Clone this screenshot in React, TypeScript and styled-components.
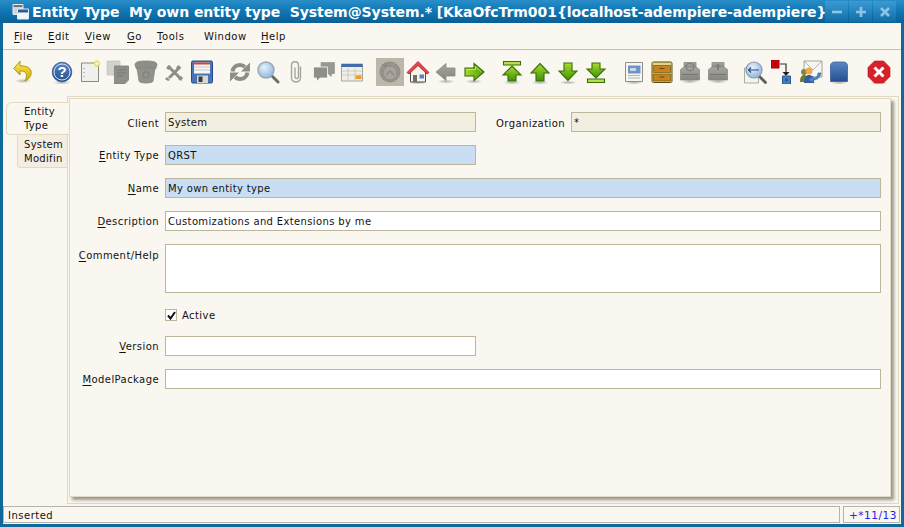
import React from 'react';
import styled, { createGlobalStyle } from 'styled-components';

const GlobalStyle = createGlobalStyle`
  html, body {
    margin: 0;
    padding: 0;
    height: 527px;
    overflow: hidden;
    background: #0f6a9c;
  }
  * { box-sizing: border-box; }
`;

const uiFont = `"DejaVu Sans", "Liberation Sans", sans-serif`;

const Frame = styled.div`
  width: 904px;
  height: 527px;
  display: flex;
  flex-direction: column;
  background: #0f6a9c;
  font-family: ${uiFont};
  font-size: 10px;
  color: #111;
`;

const TitleBar = styled.div`
  height: 23px;
  flex: none;
  display: flex;
  align-items: center;
  padding-left: 12px;
  background: linear-gradient(#2a8ec8 0%, #0f78b6 45%, #0a5f96 100%);
`;

const TitleIcon = styled.svg`
  flex: none;
  width: 17px;
  height: 17px;
`;

const TitleText = styled.div`
  flex: none;
  width: 790px;
  margin-left: 3px;
  white-space: pre;
  color: #fff;
  font-weight: bold;
  font-size: 14px;
  letter-spacing: -0.07px;
`;

const WinButtons = styled.div`
  flex: none;
  display: flex;
  height: 21px;
  margin-left: auto;
  margin-right: 8px;
  gap: 1px;
`;

const WinButton = styled.div`
  width: 23px;
  display: flex;
  align-items: center;
  justify-content: center;
  background: linear-gradient(#3a9ad2, #0f6ea8);
`;

const Client = styled.div`
  flex: 1;
  min-height: 0;
  margin: 0 3px 3px;
  display: flex;
  flex-direction: column;
  background: #faf7f0;
`;

const MenuBar = styled.div`
  height: 27px;
  flex: none;
  display: flex;
  align-items: center;
  padding: 1px 0 0 11px;
  border-bottom: 1px solid #c6bfa9;
`;

const MenuItem = styled.div<{ $w: number }>`
  width: ${(p) => p.$w}px;
  letter-spacing: 0.55px;
  u { text-underline-offset: 2px; }
`;

const Toolbar = styled.div`
  height: 46px;
  flex: none;
  display: flex;
  padding: 8px 0 0 6px;
  gap: 10px;
`;

const ToolGroup = styled.div<{ $gapLeft?: number }>`
  display: flex;
  margin-left: ${(p) => p.$gapLeft ?? 0}px;
`;

const ToolButton = styled.div<{ $active?: boolean }>`
  width: 28px;
  height: 28px;
  display: flex;
  align-items: center;
  justify-content: center;
  background: ${(p) => (p.$active ? '#bcb7a8' : 'transparent')};
`;

const Body = styled.div`
  flex: 1;
  min-height: 0;
  display: flex;
  padding-right: 2px;
`;

const TabColumn = styled.div`
  width: 64px;
  flex: none;
  padding: 6px 0 0 3px;
  display: flex;
  flex-direction: column;
`;

const Tab = styled.div<{ $selected?: boolean }>`
  position: relative;
  z-index: 1;
  white-space: pre;
  overflow: hidden;
  line-height: 14px;
  letter-spacing: 0.3px;
  height: 33px;
  margin-left: ${(p) => (p.$selected ? 0 : 11)}px;
  margin-right: ${(p) => (p.$selected ? -2 : -1)}px;
  padding: ${(p) => (p.$selected ? 2 : 3)}px 0 0 ${(p) => (p.$selected ? 17 : 6)}px;
  background: ${(p) => (p.$selected ? '#faf7f0' : '#f3eee1')};
  border: 1px solid #e2d9c2;
  border-right: ${(p) => (p.$selected ? 'none' : '1px solid #e2d9c2')};
  border-top: ${(p) => (p.$selected ? '1px solid #e2d9c2' : 'none')};
  border-radius: ${(p) => (p.$selected ? '6px 0 0 4px' : '0 0 0 4px')};
`;

const TabFrame = styled.div`
  flex: 1;
  min-width: 0;
  display: flex;
  padding: 1px 7px 6px 1px;
  border: 1px solid #e2d9c2;
`;

const Panel = styled.div`
  flex: 1;
  border: 1px solid #e2d9c2;
  box-shadow: 3px 3px 3px rgba(90, 85, 70, 0.6);
  background: #faf7f0;
  padding: 13px 0 0;
`;

const Form = styled.div`
  display: grid;
  grid-template-columns: 89px 311px 83px 310px;
  column-gap: 6px;
  row-gap: 13px;
  align-items: center;
`;

const Label = styled.div<{ $top?: boolean; $nudge?: number }>`
  text-align: right;
  white-space: nowrap;
  letter-spacing: 0.42px;
  align-self: ${(p) => (p.$top ? 'start' : 'center')};
  padding-top: ${(p) => p.$nudge ?? 0}px;
  u { text-underline-offset: 2px; }
`;

const Field = styled.div<{ $kind?: 'readonly' | 'mandatory'; $span?: boolean; $tall?: boolean }>`
  height: ${(p) => (p.$tall ? 49 : 20)}px;
  grid-column: ${(p) => (p.$span ? 'span 3' : 'auto')};
  padding: 3px 0 0 2px;
  line-height: 14px;
  letter-spacing: 0.36px;
  white-space: pre;
  border: 1px solid #bdb59c;
  background: ${(p) =>
    p.$kind === 'readonly' ? '#f1efe0' : p.$kind === 'mandatory' ? '#c9def2' : '#ffffff'};
`;

const CheckRow = styled.div`
  grid-column: 2 / span 3;
  display: flex;
  align-items: center;
  height: 17px;
  padding-top: 1px;
  letter-spacing: 0.42px;
`;

const CheckBox = styled.div`
  width: 12px;
  height: 12px;
  margin-right: 5px;
  border: 1px solid #bdb59c;
  background: #fff;
  display: flex;
  align-items: center;
  justify-content: center;
`;

const StatusBar = styled.div`
  height: 17px;
  flex: none;
  margin: 2px 1px 1px 0;
  display: flex;
  gap: 3px;
`;

const StatusCell = styled.div<{ $count?: boolean }>`
  flex: ${(p) => (p.$count ? '0 0 57px' : '1')};
  border: 1px solid #b5b3aa;
  line-height: 17px;
  padding-left: ${(p) => (p.$count ? 5 : 4)}px;
  letter-spacing: 0.5px;
  white-space: nowrap;
  font-size: ${(p) => (p.$count ? 10.5 : 10)}px;
  color: ${(p) => (p.$count ? '#2020f0' : '#111')};
`;

const Defs = styled.svg`
  display: block;
  width: 0;
  height: 0;
`;

const GradientDefs = () => (
  <Defs aria-hidden="true">
    <defs>
      <linearGradient id="gGreen" x1="0" y1="0" x2="0" y2="1">
        <stop offset="0" stopColor="#a8dc2c" />
        <stop offset="1" stopColor="#3f8f08" />
      </linearGradient>
      <linearGradient id="gGreenR" x1="0" y1="0" x2="1" y2="0">
        <stop offset="0" stopColor="#a8dc2c" />
        <stop offset="1" stopColor="#4f9c0c" />
      </linearGradient>
      <linearGradient id="gYellow" x1="0" y1="0" x2="0" y2="1">
        <stop offset="0" stopColor="#fbe85a" />
        <stop offset="1" stopColor="#d2a900" />
      </linearGradient>
      <linearGradient id="gGrey" x1="0" y1="0" x2="0" y2="1">
        <stop offset="0" stopColor="#a6a6a2" />
        <stop offset="1" stopColor="#85857f" />
      </linearGradient>
      <linearGradient id="gBlue" x1="0" y1="0" x2="0" y2="1">
        <stop offset="0" stopColor="#5c86c4" />
        <stop offset="1" stopColor="#23508f" />
      </linearGradient>
      <radialGradient id="gLens" cx="0.4" cy="0.35" r="0.7">
        <stop offset="0" stopColor="#e6f1fb" />
        <stop offset="1" stopColor="#8db4de" />
      </radialGradient>
      <radialGradient id="gShadow">
        <stop offset="0" stopColor="#000" stopOpacity="0.28" />
        <stop offset="1" stopColor="#000" stopOpacity="0" />
      </radialGradient>
    </defs>
  </Defs>
);

const Shadow = ({ y = 22, rx = 9 }: { y?: number; rx?: number }) => (
  <ellipse cx="12" cy={y} rx={rx} ry="2.2" fill="url(#gShadow)" />
);

const grey = { fill: 'url(#gGrey)', stroke: '#8a8a85', strokeWidth: 0.8 };
const green = { fill: 'url(#gGreen)', stroke: '#356f06', strokeWidth: 1.1, strokeLinejoin: 'miter' as const };

const PrinterShape = () => (
  <>
    <path d="M6 2.500h12v7H6z" {...grey} />
    <path d="M2.500 9.500 6 7h12l3.500 2.500V20h-19z" {...grey} />
    <path d="M4 14.500h16" stroke="#77776f" strokeWidth="1" />
    <Shadow y={21.500} />
  </>
);

const icons: Record<string, React.ReactNode> = {
  undo: (
    <>
      <Shadow y={21} rx={8} />
      <path
        d="M9 1.200 2.800 8.500 9 15v-4c4 0 6.600 1 6.400 4.600 0 2-.6 3.800-1.600 5.400 4-1.400 6.400-4.800 6.400-8.400C20.200 7.600 15 5.800 9 5.800z"
        fill="url(#gYellow)"
        stroke="#a98c07"
        strokeWidth="0.9"
      />
    </>
  ),
  help: (
    <>
      <Shadow y={22.500} />
      <circle cx="12" cy="12" r="9.800" fill="url(#gBlue)" stroke="#2b5594" strokeWidth="0.8" />
      <circle cx="12" cy="12" r="8" fill="none" stroke="#d4e0f0" strokeWidth="1" />
      <text x="12" y="17" textAnchor="middle" fontFamily="Liberation Sans" fontWeight="bold" fontSize="15" fill="#fff">?</text>
    </>
  ),
  newDoc: (
    <>
      <path d="M3.500 3h17v18.500h-17z" fill="#f0f0ec" stroke="#8a8a84" strokeWidth="1" />
      <path d="M6 8v1M6 12v1M6 16v1" stroke="#8a8a84" />
      <circle cx="19" cy="3.500" r="2.600" fill="#fbf6a0" stroke="#e6cf52" strokeWidth="1" />
    </>
  ),
  copy: (
    <>
      <path d="M1 1h13v14H1z" fill="#d2d2cd" stroke="#c4c4bf" strokeWidth="0.8" />
      <path d="M8.500 6h14v14l-4 4h-10z" fill="#8f8f8a" stroke="#7f7f7a" strokeWidth="0.8" />
      <path d="M11 10h9M11 13h9M11 16h6" stroke="#7a7a75" />
    </>
  ),
  trash: (
    <>
      <path d="M1 5C1 2 4 1 12 1s11 1 11 4l-1.500 4h-19z" fill="#8e8e89" stroke="#84847f" strokeWidth="0.8" />
      <path d="M3 8h18l-2 13c-.2 1-2 2-7 2s-6.800-1-7-2z" fill="#92928d" stroke="#84847f" strokeWidth="0.8" />
      <circle cx="12" cy="15" r="3.200" fill="none" stroke="#7f7f7a" strokeWidth="1" />
    </>
  ),
  cut: (
    <>
      <path d="M6 6 18 18M18 7 7 18" stroke="#8e8e88" strokeWidth="3" />
      <path d="M4 8 7 5 9 7 6.500 10zM16 5l3 2-2 3-3-2zM5 17l3 3-2 1-3-2zM16 19l3-3 2 2-2 3z" fill="#8e8e88" />
    </>
  ),
  save: (
    <>
      <path d="M1.500 2.500C1.500 1.500 2 1 3 1h18c1 0 1.500.5 1.500 1.500v19c0 1-.5 1.500-1.500 1.500H3c-1 0-1.500-.5-1.500-1.500z" fill="#4a74b4" stroke="#1f4a8c" strokeWidth="1" />
      <path d="M4 2.500h16v11H4z" fill="#f6f6f6" />
      <path d="M4 2.500h16v2H4z" fill="#d9412f" />
      <path d="M4 7h16M4 10h16" stroke="#c4c8d4" />
      <path d="M7 15.500h11V23H7z" fill="#d8d8d4" />
      <path d="M8.500 16.500h4V22h-4z" fill="#3c3c3c" />
    </>
  ),
  refresh: (
    <>
      <path d="M4.500 11.500C5 7 8.500 5 12 5c2 0 3.500.6 5 2" fill="none" stroke="#8e8e89" strokeWidth="4" />
      <path d="M22 2.500v9h-9z" fill="#8e8e89" />
      <path d="M19.500 12.500C19 17 15.500 19 12 19c-2 0-3.500-.6-5-2" fill="none" stroke="#8e8e89" strokeWidth="4" />
      <path d="M2 21.500v-9h9z" fill="#8e8e89" />
    </>
  ),
  find: (
    <>
      <path d="M15.500 15.500 22 22" stroke="#6d6d68" strokeWidth="3" strokeLinecap="round" />
      <circle cx="10" cy="10" r="8" fill="url(#gLens)" stroke="#9aa8b4" strokeWidth="1.400" />
    </>
  ),
  attach: (
    <path
      d="M16 7v11c0 6-9 6-9 0V6c0-5 7-5 7 0v11c0 2.600-3.500 2.600-3.500 0V8"
      fill="none"
      stroke="#a5a5a0"
      strokeWidth="1.400"
      transform="translate(0.500 -0.500)"
    />
  ),
  chat: (
    <>
      <path d="M9 2.500h13.500v11h-2.500l-1 3-3-3H9z" fill="#999994" stroke="#8a8a85" strokeWidth="0.6" />
      <path d="M1.500 7h14v11H8l-3.500 3.500V18h-3z" fill="#8f8f8a" stroke="#faf7f0" strokeWidth="0.8" />
    </>
  ),
  table: (
    <>
      <path d="M1.500 4h21v17h-21z" fill="#f2efe6" stroke="#a9a69a" strokeWidth="1" />
      <path d="M1.500 4h21v3h-21z" fill="#3e6cad" />
      <path d="M2 11h20M2 15h20M8 8v13M15 8v13" stroke="#c6c3b6" strokeWidth="0.8" />
      <path d="M15.500 15.500h6V19h-6z" fill="#ef9b2c" />
    </>
  ),
  history: (
    <>
      <circle cx="12" cy="12" r="10" fill="#989490" stroke="#87837f" strokeWidth="0.8" />
      <circle cx="12" cy="13" r="7" fill="#a8a49c" stroke="#8e8a84" strokeWidth="1" />
      <path d="M8 15 12 11 16 15" fill="none" stroke="#8a8680" strokeWidth="1.300" />
      <path d="M3 5 9 2 9 8z" fill="#8e8a84" />
    </>
  ),
  home: (
    <>
      <Shadow y={22.500} />
      <path d="M4.500 11v11h15V11L12 5z" fill="#f4f3ee" stroke="#4e4e4a" strokeWidth="1" />
      <path d="M1 12.500 12 1.500l11 11-2 1.500-9-8.500-9 8.500z" fill="#e8454a" stroke="#b31d22" strokeWidth="0.8" />
      <path d="M7 15h4v7H7z" fill="#6f6f68" />
      <path d="M13.500 14.500h4.500v4h-4.500z" fill="#5d82bb" />
    </>
  ),
  back: (
    <>
      <Shadow y={21.500} />
      <path d="M2 12 12 3.500V8h9v8h-9v4.500z" {...grey} />
    </>
  ),
  forward: (
    <>
      <Shadow y={21.500} />
      <path d="M22 12 12 3.500V8H3v8h9v4.500z" fill="url(#gGreenR)" stroke="#356f06" strokeWidth="1.100" />
      <path d="M4.500 9.500h9V6.500l6 5.500" fill="none" stroke="#c8ee70" strokeWidth="0.800" />
    </>
  ),
  first: (
    <>
      <Shadow y={22.500} />
      <path d="M3.500 1.500h17v3.500h-17z" fill="#b5e04a" stroke="#356f06" strokeWidth="1.100" />
      <path d="M12 6 21 15h-5v6H8v-6H3z" {...green} />
    </>
  ),
  prev: (
    <>
      <Shadow y={22.500} />
      <path d="M12 3.500 21 13h-5v8H8v-8H3z" {...green} />
    </>
  ),
  next: (
    <>
      <Shadow y={22.500} />
      <path d="M12 20.500 3 11h5V3h8v8h5z" {...green} />
    </>
  ),
  last: (
    <>
      <path d="M12 18 3 9h5V3h8v6h5z" {...green} />
      <path d="M3.500 19h17v3.500h-17z" fill="#b5e04a" stroke="#356f06" strokeWidth="1.100" />
    </>
  ),
  report: (
    <>
      <Shadow y={22.500} />
      <path d="M3.500 2.500h17v19h-17z" fill="#f6f6f2" stroke="#8f8f89" strokeWidth="1" />
      <path d="M6 5.500h12.500v8H6z" fill="#6d94c8" />
      <path d="M8 8h6v3H8z" fill="#c7d7ea" />
      <path d="M6 15.500h12M6 18h12" stroke="#b4b4ae" />
    </>
  ),
  archive: (
    <>
      <path d="M2 3.500C2 2.500 2.500 2 3.500 2h17c1 0 1.500.5 1.500 1.500V21c0 1-.5 1.500-1.500 1.500h-17C2.500 22.500 2 22 2 21z" fill="#e2d28a" stroke="#5a4c10" strokeWidth="1" />
      <path d="M3.500 5.500h17v7h-17zM3.500 14h17v7h-17z" fill="#c9831a" stroke="#5a4c10" strokeWidth="0.600" />
      <path d="M9.500 8.500h5M9.500 17h5" stroke="#5a4c10" strokeWidth="1.200" />
    </>
  ),
  printA: (
    <>
      <PrinterShape />
      <circle cx="12" cy="7" r="4" fill="none" stroke="#7a7a75" strokeWidth="1" />
    </>
  ),
  printB: (
    <>
      <PrinterShape />
      <path d="M12 3.500 15 7h-2v3h-2V7H9z" fill="#7f7f7a" />
    </>
  ),
  zoomAcross: (
    <>
      <path d="M1.500 8h14v15h-14z" fill="#f2f2ee" stroke="#9b9b95" strokeWidth="0.800" />
      <path d="M16 16 22.500 22.500" stroke="#5d5d58" strokeWidth="2.800" strokeLinecap="round" />
      <circle cx="11" cy="10" r="8" fill="url(#gLens)" stroke="#8d9aa8" strokeWidth="1.200" />
      <path d="M5.500 10H16M8 7.500 5.500 10 8 12.500" fill="none" stroke="#2a4d86" strokeWidth="1.100" />
    </>
  ),
  workflow: (
    <>
      <path d="M0 0h8v8H0z" fill="#d8000c" stroke="#98000a" strokeWidth="1" />
      <path d="M2.500 2.500h3v3h-3z" fill="#a40008" />
      <path d="M9 4h6v9" fill="none" stroke="#333" strokeWidth="1.200" />
      <path d="M11.500 12h7L15 16z" fill="#222" />
      <path d="M11.500 16h8v8h-8z" fill="#4a7fc1" stroke="#2a5a9a" strokeWidth="1" />
      <path d="M14 18.500h3v3h-3z" fill="#2a5a9a" />
    </>
  ),
  mail: (
    <>
      <path d="M5 1h18v16H5z" fill="#f6f6f4" stroke="#8f8f8a" strokeWidth="0.800" />
      <path d="M5 1l9 9 9-9" fill="none" stroke="#9f9f9a" strokeWidth="0.800" />
      <circle cx="5" cy="12" r="3" fill="#7d8a3c" />
      <path d="M1 22c0-5 1.500-7 4-7s4 2 4 7z" fill="#6d7a34" />
      <circle cx="10" cy="11" r="3.500" fill="#f0a848" />
      <path d="M5 23c0-6 2-8 5-8s5 2 5 8z" fill="#3a5a9c" />
      <path d="M22 13c-1 5-4 7-8 7l1 3-6-3 5-4 0 2c3 0 5-2 5-5z" fill="#4f86c6" stroke="#2a5a9a" strokeWidth="0.600" />
    </>
  ),
  product: (
    <>
      <Shadow y={22.500} />
      <path d="M3.500 6c0-2.500 1.500-4 4-4h9c2.500 0 4 1.500 4 4v15.500h-17z" fill="url(#gBlue)" stroke="#3a629c" strokeWidth="0.800" />
    </>
  ),
  exit: (
    <>
      <Shadow y={22.800} />
      <path d="M7.500 1h9L23 7.500v9L16.500 23h-9L1 16.500v-9z" fill="#d8202a" stroke="#b01018" strokeWidth="0.600" />
      <path d="M7.500 7.500l9 9M16.500 7.500l-9 9" stroke="#fff" strokeWidth="3" />
    </>
  ),
};

const ToolIcon = ({ name }: { name: string }) => (
  <svg width="24" height="24" viewBox="0 0 24 24">
    {icons[name]}
  </svg>
);

const toolGroups: { gap?: number; items: string[] }[] = [
  { items: ['undo'] },
  { gap: 1, items: ['help', 'newDoc', 'copy', 'trash', 'cut', 'save'] },
  { items: ['refresh', 'find', 'attach', 'chat', 'table'] },
  { items: ['history', 'home', 'back', 'forward'] },
  { items: ['first', 'prev', 'next', 'last'] },
  { items: ['report', 'archive', 'printA', 'printB'] },
  { gap: -1, items: ['zoomAcross', 'workflow', 'mail', 'product'] },
  { gap: 2, items: ['exit'] },
];

const menus: { key: string; rest: string; w: number; plain?: boolean }[] = [
  { key: 'F', rest: 'ile', w: 34 },
  { key: 'E', rest: 'dit', w: 37 },
  { key: 'V', rest: 'iew', w: 42 },
  { key: 'G', rest: 'o', w: 30 },
  { key: 'T', rest: 'ools', w: 47 },
  { key: 'W', rest: 'indow', w: 57, plain: true },
  { key: 'H', rest: 'elp', w: 40 },
];

const Mnemonic = ({ text }: { text: string }) => (
  <>
    <u>{text[0]}</u>
    {text.slice(1)}
  </>
);

export default function App() {
  return (
    <>
      <GlobalStyle />
      <Frame>
        <GradientDefs />
        <TitleBar>
          <TitleIcon viewBox="0 0 17 17">
            <path d="M1 1.500h10v10H1z" fill="#d0d4d8" stroke="#e8ecf0" strokeWidth="1" />
            <path d="M1.500 2h9v2h-9z" fill="#6f7478" />
            <path d="M5.500 6h11v10h-11z" fill="#f4f6f8" stroke="#e8ecf0" strokeWidth="1" />
            <path d="M6 6.500h10v3H6z" fill="#2c5c9c" />
          </TitleIcon>
          <TitleText>Entity Type  My own entity type  System@System.* [KkaOfcTrm001{'{'}localhost-adempiere-adempiere{'}'}</TitleText>
          <WinButtons>
            {['M-5 0H5', 'M-5 0H5M0-5V5', 'M-4-4 4 4M4-4-4 4'].map((d) => (
              <WinButton key={d}>
                <svg width="14" height="14" viewBox="-7 -7 14 14">
                  <path d={d} stroke="#8fc4e4" strokeWidth="2.600" fill="none" />
                </svg>
              </WinButton>
            ))}
          </WinButtons>
        </TitleBar>
        <Client>
          <MenuBar>
            {menus.map((m) => (
              <MenuItem key={m.key} $w={m.w}>
                {m.plain ? m.key + m.rest : <Mnemonic text={m.key + m.rest} />}
              </MenuItem>
            ))}
          </MenuBar>
          <Toolbar>
            {toolGroups.map((g) => (
              <ToolGroup key={g.items[0]} $gapLeft={g.gap}>
                {g.items.map((name) => (
                  <ToolButton key={name} $active={name === 'history'}>
                    <ToolIcon name={name} />
                  </ToolButton>
                ))}
              </ToolGroup>
            ))}
          </Toolbar>
          <Body>
            <TabColumn>
              <Tab $selected>{'Entity\nType'}</Tab>
              <Tab>{'System\nModifin'}</Tab>
            </TabColumn>
            <TabFrame>
              <Panel>
                <Form>
                  <Label $nudge={2}>Client</Label>
                  <Field $kind="readonly">System</Field>
                  <Label $nudge={2}>Organization</Label>
                  <Field $kind="readonly">*</Field>

                  <Label><Mnemonic text="Entity Type" /></Label>
                  <Field $kind="mandatory">QRST</Field>
                  <div />
                  <div />

                  <Label><Mnemonic text="Name" /></Label>
                  <Field $kind="mandatory" $span>My own entity type</Field>

                  <Label><Mnemonic text="Description" /></Label>
                  <Field $span>Customizations and Extensions by me</Field>

                  <Label $top $nudge={6}><Mnemonic text="Comment/Help" /></Label>
                  <Field $span $tall />

                  <CheckRow>
                    <CheckBox>
                      <svg width="9" height="9" viewBox="0 0 9 9">
                        <path d="M1 4.500 3.500 7.500 8 1" fill="none" stroke="#111" strokeWidth="2" />
                      </svg>
                    </CheckBox>
                    Active
                  </CheckRow>

                  <Label><Mnemonic text="Version" /></Label>
                  <Field />
                  <div />
                  <div />

                  <Label><Mnemonic text="ModelPackage" /></Label>
                  <Field $span />
                </Form>
              </Panel>
            </TabFrame>
          </Body>
          <StatusBar>
            <StatusCell>Inserted</StatusCell>
            <StatusCell $count>+*11/13</StatusCell>
          </StatusBar>
        </Client>
      </Frame>
    </>
  );
}
